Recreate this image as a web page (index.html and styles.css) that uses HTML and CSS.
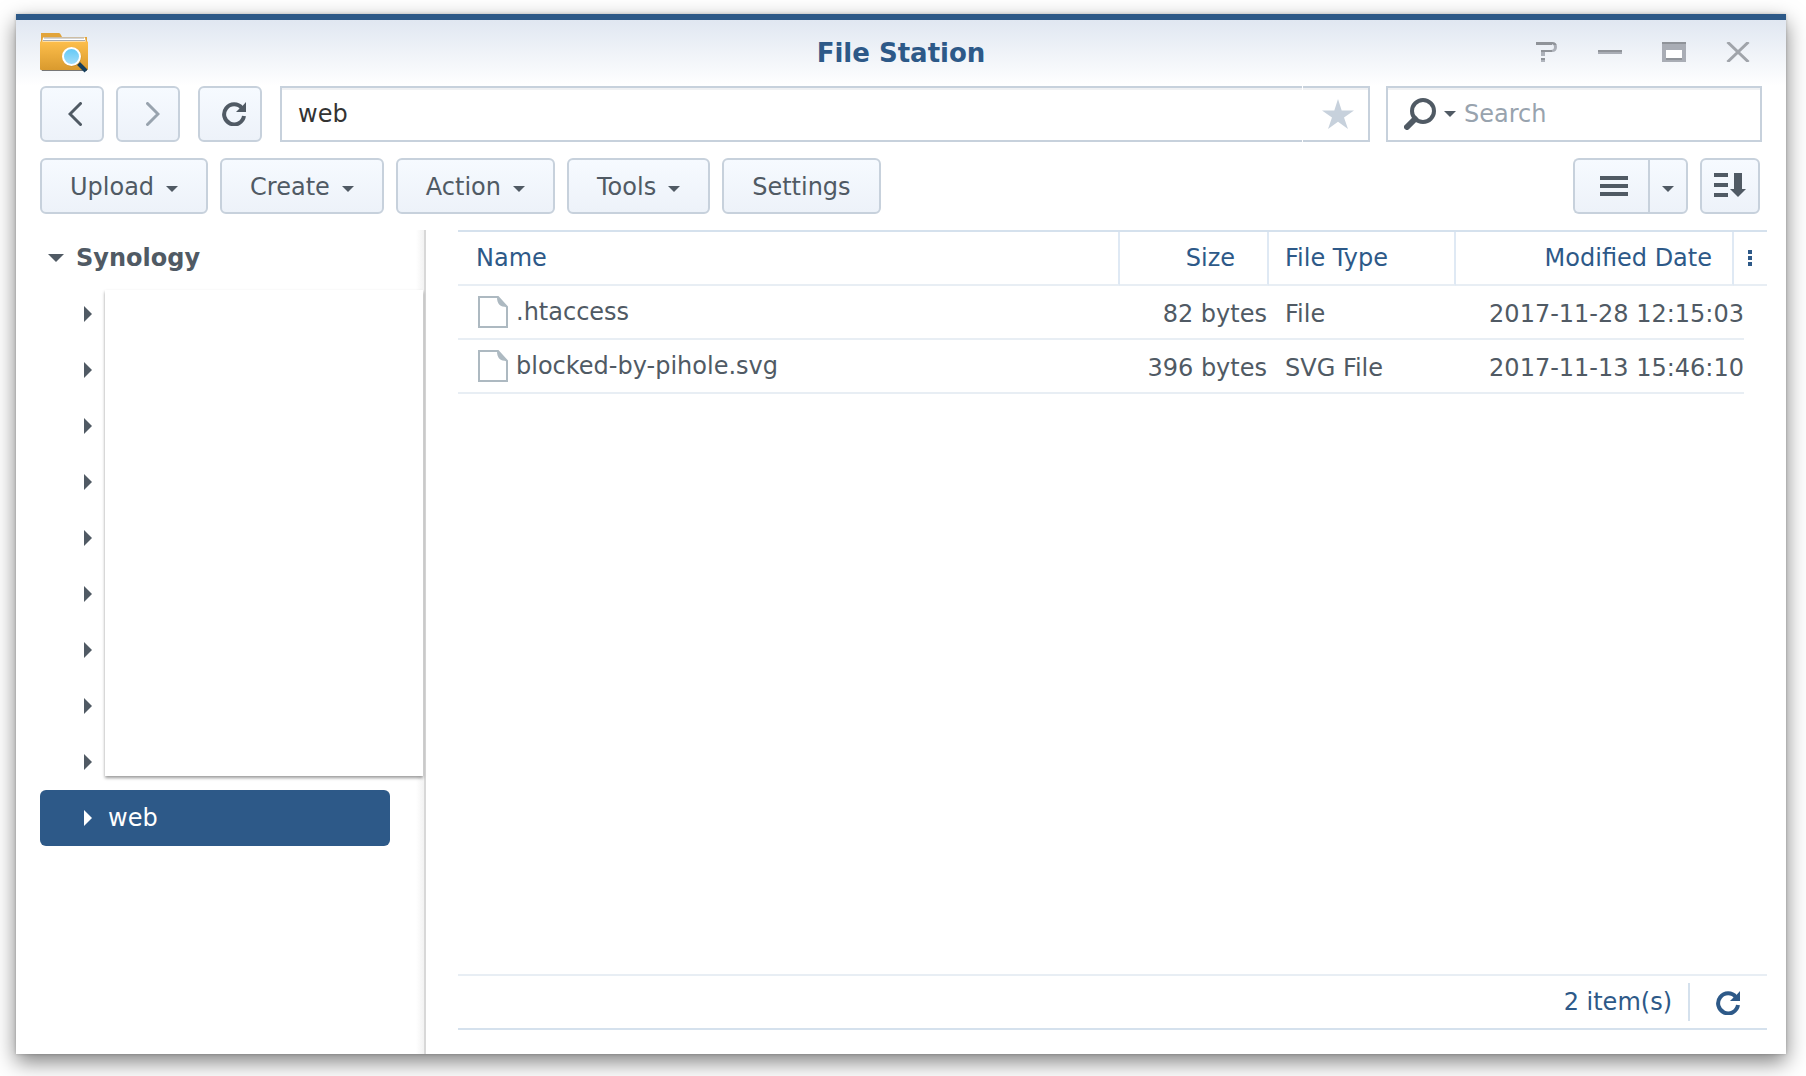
FILE: index.html
```html
<!DOCTYPE html>
<html lang="en">
<head>
<meta charset="utf-8">
<title>File Station</title>
<link rel="stylesheet" href="styles.css">
</head>
<body>
<svg class="defs" width="0" height="0" aria-hidden="true">
  <symbol id="caret" viewBox="0 0 12 6"><path d="M0 0h12L6 6z" fill="currentColor"/></symbol>
  <symbol id="refresh" viewBox="0 0 24 24"><path d="M24 0V10H14l4-4 2-1.500z" fill="currentColor"/><path d="M20 6.200A10 10 0 1 0 22 14" fill="none" stroke="currentColor" stroke-width="4"/></symbol>
  <symbol id="branch" viewBox="0 0 8 16"><path d="M0 0l8 8-8 8z" fill="currentColor"/></symbol>
  <symbol id="page" viewBox="0 0 30 32"><path d="M1 1h19l9 10v20H1z" fill="#fff" stroke="#adb9c1" stroke-width="2"/><path d="M19 1l10 10c-7 0-10-3-10-10z" fill="#adb9c1"/></symbol>
  <linearGradient id="glyph" gradientUnits="userSpaceOnUse" x1="0" y1="0" x2="0" y2="20"><stop offset="0" stop-color="#8f9399"/><stop offset=".15" stop-color="#8f9399"/><stop offset=".15" stop-color="#a9adb5"/><stop offset="1" stop-color="#b0b5bd"/></linearGradient>
</svg>
<main class="window">
  <header class="titlebar">
    <svg class="app-icon" width="48" height="42" viewBox="0 0 48 42" aria-hidden="true">
      <defs>
        <linearGradient id="folder" x1="0" y1="0" x2="0" y2="1"><stop offset="0" stop-color="#fdbe4b"/><stop offset="1" stop-color="#d99a2e"/></linearGradient>
        <linearGradient id="lens" x1="0" y1="0" x2="0" y2="1"><stop offset="0" stop-color="#60c8f6"/><stop offset="1" stop-color="#a5defa"/></linearGradient>
      </defs>
      <path d="M1 1h18q1 0 2 2l1 2h25v8H1z" fill="#e2a43a"/>
      <path d="M3 5.500h42l1 6H2z" fill="#fff"/>
      <path d="M4 6h40M3 8.500h42" stroke="#aaa" stroke-width="1"/>
      <path d="M1 37h46v2H2z" fill="#777"/>
      <path d="M0 9.500h48V37q0 1-1 1H1q-1 0-1-1z" fill="url(#folder)"/>
      <path d="M38.500 31.500l7.500 7.500" stroke="#173f5c" stroke-width="4"/>
      <circle cx="32" cy="25" r="9.500" fill="#b57b1b" opacity=".5"/>
      <circle cx="31.500" cy="24.500" r="8.500" fill="url(#lens)" stroke="#fff" stroke-width="2"/>
    </svg>
    <h1 class="title">File Station</h1>
    <div class="controls">
      <button type="button" aria-label="Help"><svg width="24" height="20" viewBox="0 0 24 20"><path d="M2 0h16q5 0 5 5t-5 5h-7v4H7V8h10q3 0 3-3t-3-3H2zM7 16h4v4H7z" fill="url(#glyph)"/><path d="M2 0h16v3H2z" fill="#8f9399"/><path d="M7 8h11v2H7zM7 16h4v2H7z" fill="#8f9399"/></svg></button>
      <button type="button" aria-label="Minimize"><svg width="24" height="20" viewBox="0 0 24 20"><path d="M0 8h24v4H0z" fill="#a9adb5"/><path d="M0 8h24v2H0z" fill="#8f9399"/></svg></button>
      <button type="button" aria-label="Maximize"><svg width="24" height="20" viewBox="0 0 24 20"><path d="M0 0h24v20H0zM4 8v8h16V8z" fill="#a9adb5" fill-rule="evenodd"/><path d="M4 8h16v8H4z" fill="#fff"/><path d="M0 0h24v2H0zM4 16h16v2H4z" fill="#8f9399"/></svg></button>
      <button type="button" aria-label="Close"><svg width="24" height="20" viewBox="0 0 24 20"><path d="M1.500 0l21 20M22.500 0l-21 20" stroke="#a0a4aa" stroke-width="3"/></svg></button>
    </div>
  </header>
  <nav class="navigation" aria-label="Location">
    <button class="button icon back" type="button" aria-label="Back"><svg width="14" height="24" viewBox="0 0 14 24"><path d="M12.500 1.500L2 12l10.500 10.500" fill="none" stroke="currentColor" stroke-width="3" stroke-linecap="round"/></svg></button>
    <button class="button icon faded" type="button" aria-label="Forward"><svg width="14" height="24" viewBox="0 0 14 24"><path d="M1.500 1.500L12 12 1.500 22.500" fill="none" stroke="currentColor" stroke-width="3" stroke-linecap="round"/></svg></button>
    <button class="button icon reload" type="button" aria-label="Reload"><svg width="24" height="24"><use href="#refresh"/></svg></button>
    <div class="path">
      <input class="field path-input" type="text" value="web" aria-label="Path">
      <button class="field star" type="button" aria-label="Favorite"><svg width="32" height="30" viewBox="0 0 32 30"><path d="M16 0l3.700 11.500H32l-10 7L26 30l-10-7.200L6 30l4-11.500-10-7h12.300z" fill="#c7d1dc"/></svg></button>
    </div>
    <div class="field search">
      <button class="search-menu" type="button" aria-label="Search options">
        <svg width="32" height="32" viewBox="0 0 32 32"><circle cx="19" cy="13" r="11" fill="none" stroke="currentColor" stroke-width="4"/><path d="M11 21l-8 8" stroke="currentColor" stroke-width="6" stroke-linecap="round"/></svg>
        <svg width="12" height="6"><use href="#caret"/></svg>
      </button>
      <input class="search-input" type="text" placeholder="Search" aria-label="Search">
    </div>
  </nav>
  <div class="toolbar">
    <button class="button menu" type="button">Upload<svg width="12" height="6"><use href="#caret"/></svg></button>
    <button class="button menu" type="button">Create<svg width="12" height="6"><use href="#caret"/></svg></button>
    <button class="button menu" type="button">Action<svg width="12" height="6"><use href="#caret"/></svg></button>
    <button class="button menu" type="button">Tools<svg width="12" height="6"><use href="#caret"/></svg></button>
    <button class="button menu" type="button">Settings</button>
    <div class="view">
      <button class="button view-list" type="button" aria-label="List view"><svg width="28" height="20" viewBox="0 0 28 20"><path d="M0 0h28v4H0zM0 8h28v4H0zM0 16h28v4H0z" fill="currentColor"/></svg></button>
      <button class="button view-more" type="button" aria-label="Choose view"><svg width="12" height="6"><use href="#caret"/></svg></button>
    </div>
    <button class="button sort" type="button" aria-label="Sort"><svg width="32" height="24" viewBox="0 0 32 24"><path d="M0 0h14v4H0zM0 10h14v4H0zM0 20h14v4H0zM20 0h8v16h4l-8 8-8-8h4z" fill="currentColor"/></svg></button>
  </div>
  <div class="content">
    <aside class="sidebar">
      <h2 class="root"><svg width="16" height="8"><use href="#caret"/></svg>Synology</h2>
      <div class="tree">
        <ul class="branches">
          <li><svg width="8" height="16"><use href="#branch"/></svg></li>
          <li><svg width="8" height="16"><use href="#branch"/></svg></li>
          <li><svg width="8" height="16"><use href="#branch"/></svg></li>
          <li><svg width="8" height="16"><use href="#branch"/></svg></li>
          <li><svg width="8" height="16"><use href="#branch"/></svg></li>
          <li><svg width="8" height="16"><use href="#branch"/></svg></li>
          <li><svg width="8" height="16"><use href="#branch"/></svg></li>
          <li><svg width="8" height="16"><use href="#branch"/></svg></li>
          <li><svg width="8" height="16"><use href="#branch"/></svg></li>
        </ul>
        <div class="cover"></div>
      </div>
      <a class="selected" href="#web"><svg width="8" height="16"><use href="#branch"/></svg>web</a>
    </aside>
    <section class="files">
      <table class="grid">
        <colgroup><col><col class="c-size"><col class="c-type"><col class="c-date"><col class="c-edge"><col class="c-end"></colgroup>
        <thead>
          <tr><th>Name</th><th class="right size">Size</th><th>File Type</th><th class="right date">Modified Date</th><th class="more" colspan="2" aria-label="Columns"><svg width="4" height="16" viewBox="0 0 4 16"><path d="M0 0h4v4H0zM0 6h4v4H0zM0 12h4v4H0z" fill="currentColor"/></svg></th></tr>
        </thead>
        <tbody>
          <tr><td class="file"><span class="name"><svg width="30" height="32"><use href="#page"/></svg>.htaccess</span></td><td class="right bytes">82 bytes</td><td>File</td><td class="right" colspan="2">2017-11-28 12:15:03</td></tr>
          <tr><td class="file"><span class="name"><svg width="30" height="32"><use href="#page"/></svg>blocked-by-pihole.svg</span></td><td class="right bytes">396 bytes</td><td>SVG File</td><td class="right" colspan="2">2017-11-13 15:46:10</td></tr>
        </tbody>
      </table>
      <footer class="status">
        <span>2 item(s)</span>
        <button type="button" aria-label="Refresh list"><svg width="24" height="24"><use href="#refresh"/></svg></button>
      </footer>
    </section>
  </div>
</main>
</body>
</html>
```
FILE: styles.css
```css
* { box-sizing: border-box; }
body {
  margin: 0;
  min-height: 100vh;
  padding: 14px 20px 22px 16px;
  display: flex;
  background: #fff;
  color: #505a64;
  font: 24px/28px Verdana, "DejaVu Sans", sans-serif;
}
.defs { position: absolute; }
svg { display: block; flex: none; }
button, input { font: inherit; color: inherit; }
button { padding: 0; border: 0; background: none; }
h1, h2, ul { margin: 0; padding: 0; font-size: inherit; }

.window {
  flex: 1;
  min-width: 0;
  display: flex;
  flex-direction: column;
  border-top: 6px solid #2d5988;
  background: linear-gradient(#e0e7f1, #fff 66px);
  box-shadow: 0 8px 20px rgba(0, 0, 0, .5), 0 0 3px rgba(0, 0, 0, .2);
}

.titlebar {
  height: 66px;
  padding: 0 24px;
  display: grid;
  grid-template-columns: 1fr auto 1fr;
  align-items: center;
}
.title { color: #2d5988; font-size: 26px; font-weight: bold; }
.controls { display: flex; justify-content: flex-end; gap: 40px; padding-right: 12px; margin-bottom: 2px; }

.navigation, .toolbar { display: flex; padding: 0 24px; }
.navigation { gap: 12px; }
.toolbar { gap: 12px; padding: 16px 26px 16px 24px; }
.button {
  height: 56px;
  display: flex;
  align-items: center;
  justify-content: center;
  border: 2px solid #c7d1dc;
  border-radius: 6px;
  background: linear-gradient(#f6faff, #edf2f9);
}
.icon { width: 64px; padding-left: 8px; }
.back { padding-left: 6px; }
.faded { color: #98a3ae; padding-left: 10px; }
.reload { margin-left: 6px; }
.field { height: 56px; border: 2px solid #c7d1dc; border-radius: 0; background: #fff; box-shadow: inset 0 2px #f0f1f3; }
.path { flex: 1; display: flex; gap: 1px; margin-left: 6px; margin-right: 4px; }
.path-input { flex: 1; min-width: 0; padding: 0 16px; border-right: 0; color: #333; }
.star { width: 67px; display: flex; align-items: center; padding-left: 19px; border-left: 0; }
.search { width: 376px; display: flex; padding-left: 16px; }
.search-menu { display: flex; align-items: center; gap: 8px; }
.search-input { flex: 1; min-width: 0; padding: 0 8px; border: 0; background: none; }
.search-input::placeholder { color: #98a3ae; opacity: 1; }
input { outline: 0; }

.menu { gap: 12px; padding: 2px 28px 0; }
.menu svg { margin-top: 4px; }
.view { display: flex; margin-left: auto; }
.view-list { width: 75px; padding-left: 4px; border-right: 0; border-radius: 6px 0 0 6px; }
.view-more { width: 40px; border-radius: 0 6px 6px 0; }
.view-more svg { margin-top: 6px; }
.sort { width: 60px; padding-bottom: 2px; }

.content { flex: 1; display: flex; }
.sidebar {
  width: 410px;
  padding-left: 24px;
  border-right: 2px solid #d8d8d8;
  background: linear-gradient(to left, #f2f2f2, #fff 8px);
}
.root { display: flex; align-items: center; gap: 12px; height: 56px; padding-left: 8px; }
.tree { display: flex; }
.branches { width: 65px; list-style: none; }
.branches li { height: 56px; padding: 20px 0 0 44px; }
.cover { flex: 1; margin: 4px 1px 14px 0; background: #fff; box-shadow: 0 2px 3px rgba(0, 0, 0, .4); }
.selected {
  width: 350px;
  height: 56px;
  display: flex;
  align-items: center;
  gap: 16px;
  padding-left: 44px;
  border-radius: 6px;
  background: #2d5988;
  color: #fff;
  text-decoration: none;
}

.files { flex: 1; min-width: 0; display: flex; flex-direction: column; padding: 0 19px 24px 32px; }
.grid { width: 100%; table-layout: fixed; border-collapse: separate; border-spacing: 0; border-top: 2px solid #d5e1ed; }
.c-size { width: 149px; }
.c-type { width: 187px; }
.c-date { width: 278px; }
.c-edge { width: 10px; }
.c-end { width: 23px; }
.grid th, .grid td { height: 54px; padding: 0 0 0 16px; border-bottom: 2px solid #e8eef4; text-align: left; white-space: nowrap; }
.grid td { padding-top: 3px; }
.grid .file { padding: 0 0 0 20px; }
.grid th { border-right: 2px solid #dfe9f4; color: #2d5988; font-weight: normal; }
.grid th:first-child { padding-left: 18px; }
.grid .right { padding-left: 0; text-align: right; }
.grid .bytes { padding-right: 2px; }
.grid .size { padding-right: 32px; }
.grid .date { padding-right: 20px; }
.grid .more { padding-left: 14px; border-right: 0; }
.name { display: flex; align-items: center; gap: 8px; }
.status { margin-top: auto; height: 56px; display: flex; align-items: center; gap: 16px; justify-content: flex-end; border-top: 2px solid #e8eef4; border-bottom: 2px solid #d5e1ed; color: #2d5988; }
.status button { height: 38px; padding: 2px 27px 0 26px; border-left: 2px solid #d5e1ed; }
```
